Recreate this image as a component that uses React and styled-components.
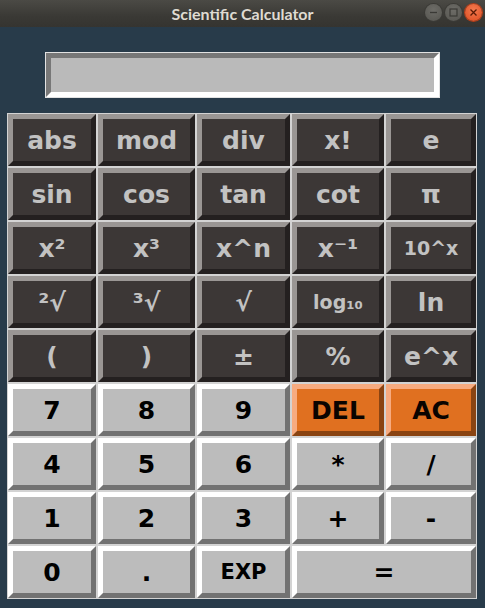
import React from 'react';
import styled, { createGlobalStyle } from 'styled-components';

const GlobalStyle = createGlobalStyle`
  html, body {
    margin: 0;
    padding: 0;
    background: #283b4a;
  }
  * {
    box-sizing: border-box;
  }
`;

const Window = styled.div`
  width: 485px;
  height: 608px;
  background: #283b4a;
  display: flex;
  flex-direction: column;
  overflow: hidden;
`;

const TitleBar = styled.div`
  height: 27px;
  flex: none;
  display: flex;
  align-items: center;
  justify-content: center;
  position: relative;
  background: linear-gradient(#4b4a45, #3a3935 60%, #353430);
  color: #dfdbd2;
  font-family: Lato, "DejaVu Sans", sans-serif;
  font-weight: bold;
  font-size: 16px;
`;

const WinButtons = styled.div`
  position: absolute;
  right: 3px;
  top: 4px;
  display: flex;
  gap: 3px;
`;

const WinButton = styled.span`
  width: 17px;
  height: 17px;
  border-radius: 50%;
  display: flex;
  align-items: center;
  justify-content: center;
  background: ${p => p.$close
    ? 'radial-gradient(circle at 50% 35%, #f27a4f, #df4b1f)'
    : 'radial-gradient(circle at 50% 35%, #6d6c67, #55544f)'};
  box-shadow: 0 0 0 1px ${p => p.$close ? '#b53d18' : '#3b3a36'};
`;

const Display = styled.div`
  margin: 25px 0 0 45px;
  width: 395px;
  height: 46px;
  flex: none;
  border: 1px solid #e2e2e2;
`;

const DisplayWell = styled.div`
  height: 100%;
  background: #bababa;
  border: 5px solid;
  border-color: #777777 #ffffff #ffffff #777777;
`;

const Keypad = styled.div`
  margin: 15px 0 0 7px;
  display: grid;
  grid-template-columns: 90px 99px 95px 94px 92px;
  grid-auto-rows: 54px;
`;

const palettes = {
  dark: { face: '#3c3736', hi: '#9a9694', lo: '#242020', text: '#c2c2c2' },
  light: { face: '#bcbcbc', hi: '#ffffff', lo: '#727272', text: '#000000' },
  accent: { face: '#e07020', hi: '#f7ab80', lo: '#8a4412', text: '#0a0400' },
};

const Cell = styled.div`
  padding: 1px;
  background: #d3d3d3;
  grid-column: span ${p => p.$span || 1};
  display: flex;
`;

const Key = styled.button`
  flex: 1;
  margin: 0;
  padding: 0;
  display: flex;
  align-items: center;
  justify-content: center;
  border: 5px solid;
  border-color: ${p => palettes[p.$tone].hi} ${p => palettes[p.$tone].lo} ${p => palettes[p.$tone].lo} ${p => palettes[p.$tone].hi};
  background: ${p => palettes[p.$tone].face};
  color: ${p => palettes[p.$tone].text};
  font-family: "DejaVu Sans", "Liberation Sans", sans-serif;
  font-weight: bold;
  font-size: ${p => p.$size || 25}px;
  line-height: 1;
  cursor: pointer;
`;

const keys = [
  ['abs', 'mod', 'div', 'x!', 'e'],
  ['sin', 'cos', 'tan', 'cot', 'π'],
  ['x²', 'x³', 'x^n', 'x⁻¹', { label: '10^x', size: 19 }],
  ['²√', '³√', '√', { label: 'log₁₀', size: 19 }, 'ln'],
  ['(', ')', '±', '%', 'e^x'],
  ['7', '8', '9', { label: 'DEL', tone: 'accent' }, { label: 'AC', tone: 'accent' }],
  ['4', '5', '6', '*', '/'],
  ['1', '2', '3', '+', '-'],
  ['0', '.', { label: 'EXP', size: 21 }, { label: '=', span: 2 }],
];

function WindowControls() {
  return (
    <WinButtons>
      <WinButton>
        <svg width="9" height="9" viewBox="0 0 9 9">
          <path d="M1 4.5h7" stroke="#3a3935" strokeWidth="1.3" />
        </svg>
      </WinButton>
      <WinButton>
        <svg width="9" height="9" viewBox="0 0 9 9">
          <rect x="1" y="1" width="7" height="7" fill="none" stroke="#3a3935" strokeWidth="1.2" />
        </svg>
      </WinButton>
      <WinButton $close>
        <svg width="9" height="9" viewBox="0 0 9 9">
          <path d="M1.5 1.5l6 6M7.5 1.5l-6 6" stroke="#5a1a06" strokeWidth="1.3" />
        </svg>
      </WinButton>
    </WinButtons>
  );
}

export default function App() {
  return (
    <Window>
      <GlobalStyle />
      <TitleBar>
        Scientific Calculator
        <WindowControls />
      </TitleBar>
      <Display>
        <DisplayWell />
      </Display>
      <Keypad>
        {keys.map((row, r) =>
          row.map((k, c) => {
            const key = typeof k === 'string' ? { label: k } : k;
            const tone = key.tone || (r < 5 ? 'dark' : 'light');
            return (
              <Cell key={`${r}-${c}`} $span={key.span}>
                <Key $tone={tone} $size={key.size}>{key.label}</Key>
              </Cell>
            );
          })
        )}
      </Keypad>
    </Window>
  );
}
